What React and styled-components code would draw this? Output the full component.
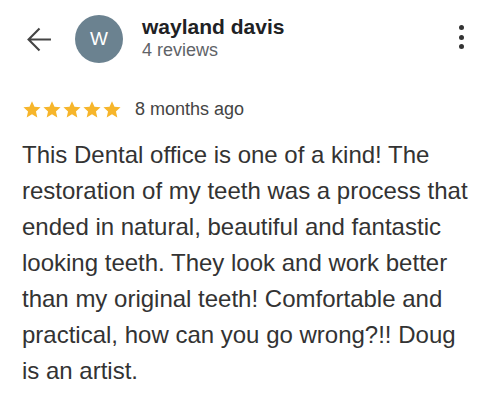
import styled, { createGlobalStyle } from "styled-components"

const GlobalStyle = createGlobalStyle`
  body {
    margin: 0;
    background: #fff;
    font-family: "Liberation Sans", Arial, sans-serif;
  }
`

const Card = styled.div`
  width: 501px;
  height: 407px;
  padding: 15px 8px 0 22px;
  box-sizing: border-box;
  background: #fff;
`

const Header = styled.div`
  display: flex;
  align-items: center;
  height: 48px;
`

const BackButton = styled.div`
  width: 30px;
  margin-left: 5px;
  display: flex;
  align-items: center;
  color: #444;
`

const Avatar = styled.div`
  width: 48px;
  height: 48px;
  border-radius: 50%;
  margin-left: 18px;
  background-color: #6b8290;
  color: #fff;
  display: flex;
  align-items: center;
  justify-content: center;
  font-size: 19px;
`

const Author = styled.div`
  display: flex;
  flex-direction: column;
  margin-left: 19px;
  margin-top: -2px;
  flex: 1;
`

const Name = styled.div`
  font-size: 21px;
  font-weight: 700;
  color: #202124;
  line-height: 24px;
`

const Reviews = styled.div`
  font-size: 18px;
  color: #5f6368;
  line-height: 22px;
`

const MoreButton = styled.div`
  display: flex;
  flex-direction: column;
  gap: 4.5px;
  margin-right: 29px;
  margin-top: -4px;
`

const Dot = styled.span`
  width: 5px;
  height: 5px;
  border-radius: 50%;
  background: #333;
`

const RatingRow = styled.div`
  display: flex;
  align-items: center;
  margin-top: 36px;
  gap: 13px;
`

const Stars = styled.div`
  display: flex;
`

const Ago = styled.span`
  font-size: 18px;
  color: #444;
`

const Body = styled.p`
  margin: 17px 0 0;
  max-width: 456px;
  font-size: 24px;
  line-height: 36px;
  color: #333;
`

const Star = () => (
  <svg width="20" height="19" viewBox="0 0 24 24">
    <path
      fill="#f6b52b"
      d="M12 1.5l3.1 7.1 7.7.7-5.8 5.1 1.7 7.6L12 18l-6.7 4 1.7-7.6-5.8-5.1 7.7-.7z"
    />
  </svg>
)

export default function App() {
  return (
    <>
      <GlobalStyle />
      <Card>
        <Header>
          <BackButton>
            <svg width="25" height="25" viewBox="0 0 24 24" fill="none" stroke="currentColor" strokeWidth="2">
              <path d="M23 12H1.5M12 1.5 1.5 12 12 22.5" />
            </svg>
          </BackButton>
          <Avatar>W</Avatar>
          <Author>
            <Name>wayland davis</Name>
            <Reviews>4 reviews</Reviews>
          </Author>
          <MoreButton>
            <Dot />
            <Dot />
            <Dot />
          </MoreButton>
        </Header>
        <RatingRow>
          <Stars>
            <Star />
            <Star />
            <Star />
            <Star />
            <Star />
          </Stars>
          <Ago>8 months ago</Ago>
        </RatingRow>
        <Body>
          This Dental office is one of a kind! The restoration of my teeth was a
          process that ended in natural, beautiful and fantastic looking teeth.
          They look and work better than my original teeth! Comfortable and
          practical, how can you go wrong?!! Doug is an artist.
        </Body>
      </Card>
    </>
  )
}
